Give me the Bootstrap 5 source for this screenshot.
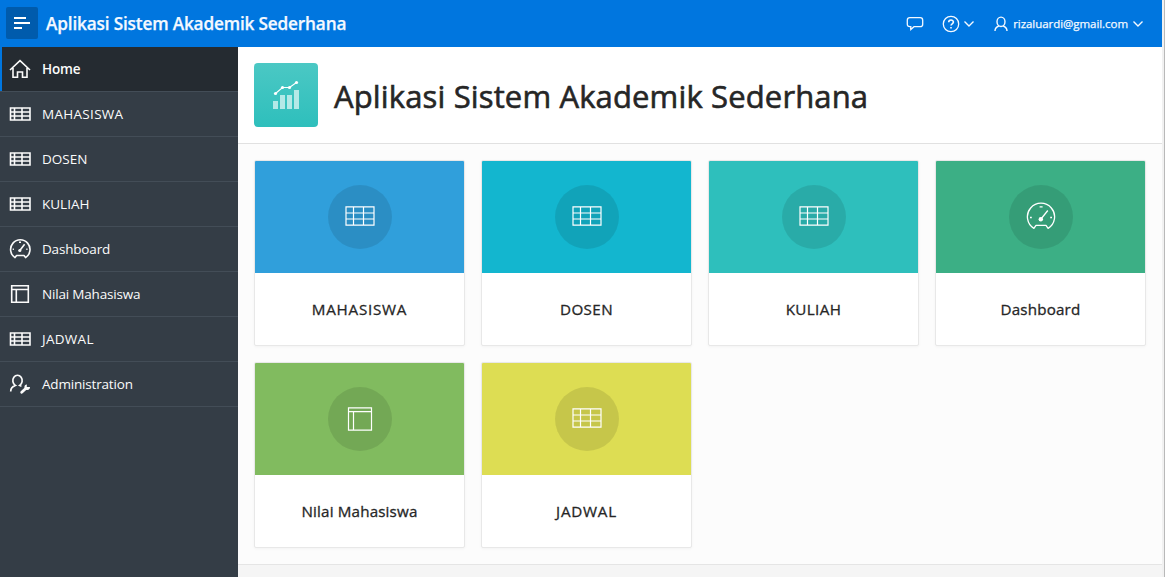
<!DOCTYPE html>
<html lang="id">
<head>
<meta charset="utf-8">
<meta name="viewport" content="width=device-width, initial-scale=1">
<title>Aplikasi Sistem Akademik Sederhana</title>
<link href="https://cdn.jsdelivr.net/npm/bootstrap@5.3.0/dist/css/bootstrap.min.css" rel="stylesheet">
<style>
body{font-family:"Open Sans","Noto Sans",sans-serif;font-size:14px;line-height:20px;color:#262626;background:#fcfcfc}
svg{display:block;fill:none;stroke:currentColor;flex:none}
.app-shell{height:577px;overflow:hidden}
.app-main{width:1162px}
.app-header{height:47px;background:#0076df;color:#f4f9ff;padding:0 18px 0 6px}
.menu-btn{width:32px;height:32px;border-radius:2px;background:#005bac;padding:0;border:0;color:#fff;margin-top:-1px}
.brand{font-size:17.2px;font-weight:600;letter-spacing:-.16px;-webkit-text-stroke:.25px currentColor;margin-left:8px;color:#f4f9ff;line-height:24px;white-space:nowrap}
.user-name{font-size:11.5px;letter-spacing:-.05px;line-height:16px;-webkit-text-stroke:.25px currentColor}
.ico-help{margin-left:18px}
.ico-caret{margin-left:3px}
.ico-user{margin:0 5px 0 19px}
.side{width:238px;background:#343d46}
.side-item{height:45px;border-bottom:1px solid #434d57;padding:0 0 1px 9px;color:#fbfbfb;font-size:13.5px;letter-spacing:-.18px;text-decoration:none;white-space:nowrap}
.side-item svg{margin-right:11px}
.side-item.current{background:#252b31;font-weight:600;box-shadow:inset 2px 0 #0076df}
.page-head{height:97px;background:#fff;border-bottom:1px solid #e1e1e1;padding:16px}
.app-logo{width:64px;height:64px;border-radius:4px;background:linear-gradient(#4bc8c4,#2ebfbc)}
.page-name{font-size:31px;line-height:40px;font-weight:400;letter-spacing:.14px;-webkit-text-stroke:.6px currentColor;margin:13px 0 0 16px;white-space:nowrap}
.tiles{padding:16px 16px 0;height:420px}
.tile{height:186px;border:1px solid #e8e8e8;border-radius:2px;background:#fff;box-shadow:0 1px 3px rgba(0,0,0,.04);overflow:hidden;color:#262626}
.tile-top{height:112px}
.tile-disc{width:64px;height:64px;border-radius:50%;background:rgba(0,0,0,.1);color:#fff;padding-bottom:2px}
.tile-disc.sheet{padding-bottom:0}
.tile-name{font-size:15.2px;line-height:24px;letter-spacing:.16px;-webkit-text-stroke:.3px currentColor}
.tile-name.caps{letter-spacing:.4px}
.side-item .caps{letter-spacing:.3px}
.side-item .caps-s{letter-spacing:0}
.tile-name.wide{letter-spacing:.75px}
.foot{background:#f5f5f5;border-top:1px solid #e5e5e5}
.scroll-edge{width:3px;background:#f1f1f1;border-right:1px solid #b9b9b9}
</style>
</head>
<body>
<svg width="0" height="0" class="position-absolute">
<defs>
<symbol id="i-grid" viewBox="0 0 22 14"><path d="M1.5 1h19.5v12H1.5zM1.5 5h19.5M1.5 9h19.5M5.5 1v12M13 1v12" stroke-width="1.6"/></symbol>
<symbol id="i-home" viewBox="0 0 22 20"><path d="M1 11 11 1.7 21 11M4 9v9.3h4.5V13h5v5.3H18V9" stroke-width="1.6"/></symbol>
<symbol id="i-gauge" viewBox="0 0 22 22"><path d="M6 19.6A9.7 9.7 0 1 1 16.6 19.6L15 17.5H7.6z" stroke-width="1.6" stroke-linejoin="round"/><path d="m11 12.2 4.6-6M10 4.2h2M3.7 11.3h1.2M17.3 11.3h1.2" stroke-width="1.6"/><circle cx="10.8" cy="12.5" r="1.6" fill="currentColor" stroke="none"/></symbol>
<symbol id="i-page" viewBox="0 0 22 20"><path d="M2.7 1.7h16.6v16.6H2.7zM2.7 5.5h16.6M7.3 5.5v12.8" stroke-width="1.6"/></symbol>
<symbol id="i-admin" viewBox="0 0 22 22"><path d="M1.7 18.5c0-3.5 1.6-5 4.6-6.1a4.7 5.4 0 1 1 4.4 0l1.8.9" stroke-width="1.7"/><path d="m12.7 19.2 4.6-4.3" stroke-width="2.8" stroke-linecap="round"/><path d="M21 14.1a2.8 2.8 0 1 1-3-2.7l-.4 2.7z" fill="currentColor" stroke="none"/></symbol>
<symbol id="t-grid" viewBox="0 0 30 20"><path d="M1 .8h28v18.4H1zM1 7h28M1 13h28M8.5 1v18M18.5 1v18" stroke-width="1.2"/></symbol>
<symbol id="t-gauge" viewBox="0 0 30 28"><path d="M7.9 26.4A13.6 13.6 0 1 1 22.1 26.4L20 23.4H10z" stroke-width="1.3" stroke-linejoin="round"/><path d="m15 17 6.8-8.5M13.6 4.8h3M4 15.5h1.8M24.2 15.5H26" stroke-width="1.3"/><circle cx="14.8" cy="17.3" r="2.2" fill="currentColor" stroke="none"/></symbol>
<symbol id="t-page" viewBox="0 0 26 24"><path d="M1.5.8h23v22.4h-23zM1.5 4.7h23M6.5 4.7v18.5" stroke-width="1.2"/></symbol>
</defs>
</svg>
<div class="app-shell d-flex">
<div class="app-main d-flex flex-column">
<header class="app-header d-flex align-items-center">
<button class="menu-btn" type="button" aria-label="Menu"><svg width="32" height="32"><path d="M8 11h12M8 16h16M8 21h8" stroke-width="2"/></svg></button>
<span class="brand">Aplikasi Sistem Akademik Sederhana</span>
<div class="ms-auto d-flex align-items-center">
<svg width="18" height="16"><path d="M3.8 1.7h10.4q2.5 0 2.5 2.5v4q0 2.5-2.5 2.5H8l-3.2 2.8v-2.8h-1q-2.5 0-2.5-2.5v-4q0-2.5 2.5-2.5z" stroke-width="1.3"/></svg>
<svg class="ico-help" width="18" height="18"><circle cx="9" cy="9" r="7.7" stroke-width="1.3"/><path d="M6.7 7.3C6.7 4.2 11.4 4.4 11.4 7 11.4 8.8 9 8.8 9 10.6M9 12v1.6" stroke-width="1.6"/></svg>
<svg class="ico-caret" width="12" height="8"><path d="m1.5 1.5 4.5 4.5 4.5-4.5" stroke-width="1.4"/></svg>
<svg class="ico-user" width="14" height="16"><ellipse cx="7" cy="5.8" rx="4" ry="4.7" stroke-width="1.4"/><path d="M1 15c0-3 1.4-4.2 3.8-5M13 15c0-3-1.4-4.2-3.8-5" stroke-width="1.4"/></svg>
<span class="user-name">rizaluardi@gmail.com</span>
<svg class="ms-1" width="12" height="8"><path d="m1.5 1.5 4.5 4.5 4.5-4.5" stroke-width="1.4"/></svg>
</div>
</header>
<div class="d-flex flex-grow-1">
<nav class="side d-flex flex-column">
<a class="side-item current d-flex align-items-center"><svg width="22" height="20"><use href="#i-home"/></svg><span>Home</span></a>
<a class="side-item d-flex align-items-center"><svg width="22" height="14"><use href="#i-grid"/></svg><span class="caps">MAHASISWA</span></a>
<a class="side-item d-flex align-items-center"><svg width="22" height="14"><use href="#i-grid"/></svg><span class="caps-s">DOSEN</span></a>
<a class="side-item d-flex align-items-center"><svg width="22" height="14"><use href="#i-grid"/></svg><span class="caps-s">KULIAH</span></a>
<a class="side-item d-flex align-items-center"><svg width="22" height="22"><use href="#i-gauge"/></svg><span>Dashboard</span></a>
<a class="side-item d-flex align-items-center"><svg width="22" height="20"><use href="#i-page"/></svg><span>Nilai Mahasiswa</span></a>
<a class="side-item d-flex align-items-center"><svg width="22" height="14"><use href="#i-grid"/></svg><span class="caps">JADWAL</span></a>
<a class="side-item d-flex align-items-center"><svg width="22" height="22"><use href="#i-admin"/></svg><span>Administration</span></a>
</nav>
<main class="flex-grow-1 d-flex flex-column">
<div class="page-head d-flex">
<div class="app-logo"><svg width="64" height="64"><g fill="#b4e9e7" stroke="none"><path d="M19 38h5v8h-5zM26 32h5v14h-5zM33 32h5v14h-5zM40 27h5v19h-5z"/></g><g stroke="#fff" fill="#fff"><path d="m21.5 30.5 7-6h7l7-5" stroke-width="1.1" fill="none"/><g stroke="none"><circle cx="21.5" cy="30.5" r="1.6"/><circle cx="28.5" cy="24.5" r="1.6"/><circle cx="35.5" cy="24.5" r="1.6"/><circle cx="42.5" cy="19.5" r="1.6"/></g></g></svg></div>
<h1 class="page-name">Aplikasi Sistem Akademik Sederhana</h1>
</div>
<div class="tiles">
<div class="row row-cols-4 g-3">
<div class="col"><div class="tile"><div class="tile-top d-flex align-items-center justify-content-center" style="background:#309fdb"><div class="tile-disc d-flex align-items-center justify-content-center"><svg width="30" height="20"><use href="#t-grid"/></svg></div></div><div class="tile-name wide text-center pt-4">MAHASISWA</div></div></div>
<div class="col"><div class="tile"><div class="tile-top d-flex align-items-center justify-content-center" style="background:#13b6cf"><div class="tile-disc d-flex align-items-center justify-content-center"><svg width="30" height="20"><use href="#t-grid"/></svg></div></div><div class="tile-name caps text-center pt-4">DOSEN</div></div></div>
<div class="col"><div class="tile"><div class="tile-top d-flex align-items-center justify-content-center" style="background:#2ebfbc"><div class="tile-disc d-flex align-items-center justify-content-center"><svg width="30" height="20"><use href="#t-grid"/></svg></div></div><div class="tile-name caps text-center pt-4">KULIAH</div></div></div>
<div class="col"><div class="tile"><div class="tile-top d-flex align-items-center justify-content-center" style="background:#3caf85"><div class="tile-disc d-flex align-items-center justify-content-center"><svg width="30" height="28"><use href="#t-gauge"/></svg></div></div><div class="tile-name text-center pt-4">Dashboard</div></div></div>
<div class="col"><div class="tile"><div class="tile-top d-flex align-items-center justify-content-center" style="background:#81bb5f"><div class="tile-disc sheet d-flex align-items-center justify-content-center"><svg width="26" height="24"><use href="#t-page"/></svg></div></div><div class="tile-name text-center pt-4">Nilai Mahasiswa</div></div></div>
<div class="col"><div class="tile"><div class="tile-top d-flex align-items-center justify-content-center" style="background:#dddd53"><div class="tile-disc d-flex align-items-center justify-content-center"><svg width="30" height="20"><use href="#t-grid"/></svg></div></div><div class="tile-name wide text-center pt-4">JADWAL</div></div></div>
</div>
</div>
<footer class="foot flex-grow-1"></footer>
</main>
</div>
</div>
<div class="scroll-edge"></div>
</div>
<script src="https://cdn.jsdelivr.net/npm/bootstrap@5.3.0/dist/js/bootstrap.bundle.min.js"></script>
</body>
</html>
